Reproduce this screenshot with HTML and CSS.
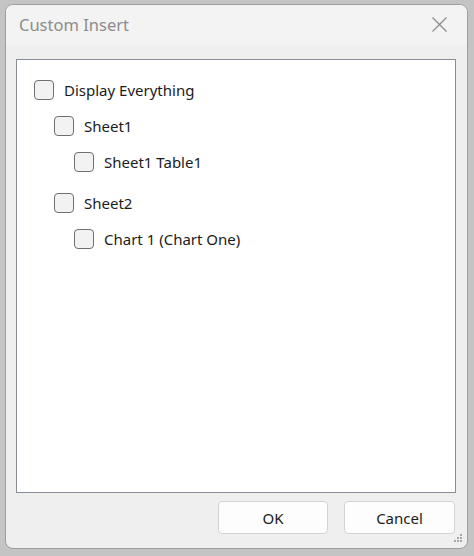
FILE: index.html
```html
<!DOCTYPE html>
<html>
<head>
<meta charset="utf-8">
<link rel="stylesheet" href="styles.css">
</head>
<body>
<div class="window">
  <div class="titlebar">
    <span class="title">Custom Insert</span>
    <svg class="close" width="15" height="15" viewBox="0 0 15 15"><path d="M0.5 0.5 L14.5 14.5 M14.5 0.5 L0.5 14.5" stroke="#8a8a8a" stroke-width="1.2" fill="none"/></svg>
  </div>
  <div class="content">
    <div class="tree">
      <div class="row lvl0"><span class="box"></span><span class="label">Display Everything</span></div>
      <div class="row lvl1"><span class="box"></span><span class="label">Sheet1</span></div>
      <div class="row lvl2"><span class="box"></span><span class="label">Sheet1 Table1</span></div>
      <div class="row lvl1 group"><span class="box"></span><span class="label">Sheet2</span></div>
      <div class="row lvl2"><span class="box"></span><span class="label">Chart 1 (Chart One)</span></div>
    </div>
    <div class="buttons">
      <button class="btn ok">OK</button>
      <button class="btn cancel">Cancel</button>
    </div>
  </div>
  <svg class="grip" width="12" height="12" viewBox="0 0 12 12">
    <rect x="8" y="1" width="2" height="2" fill="#a8a8a8"/>
    <rect x="5" y="4" width="2" height="2" fill="#a8a8a8"/>
    <rect x="8" y="4" width="2" height="2" fill="#a8a8a8"/>
    <rect x="2" y="7" width="2" height="2" fill="#a8a8a8"/>
    <rect x="5" y="7" width="2" height="2" fill="#a8a8a8"/>
    <rect x="8" y="7" width="2" height="2" fill="#a8a8a8"/>
  </svg>
</div>
</body>
</html>
```
FILE: styles.css
```css
html, body {
  margin: 0;
  padding: 0;
}
body {
  width: 474px;
  height: 556px;
  background: #c4c4c4;
  font-family: "Noto Sans", "Open Sans", sans-serif;
  overflow: hidden;
  padding-top: 4px;
  padding-left: 5px;
  box-sizing: border-box;
}
.window {
  position: relative;
  width: 463px;
  height: 545px;
  box-sizing: border-box;
  border: 1px solid #9e9e9e;
  border-radius: 8px;
  background: #efefef;
  overflow: hidden;
  display: flex;
  flex-direction: column;
}
.titlebar {
  height: 40px;
  background: #f3f3f3;
  display: flex;
  align-items: center;
  justify-content: space-between;
  padding: 0 20px 0 13px;
  flex-shrink: 0;
}
.title {
  color: #8c8c8c;
  font-size: 16.5px;
  margin-top: -1px;
}
.close {
  display: block;
  margin-top: -1px;
}
.content {
  flex: 1;
  display: flex;
  flex-direction: column;
  padding: 14px 11px 0 10px;
}
.tree {
  height: 434px;
  box-sizing: border-box;
  background: #ffffff;
  border: 1px solid #878c95;
  padding: 20px 0 0 17px;
  display: flex;
  flex-direction: column;
  gap: 16px;
}
.row {
  display: flex;
  align-items: center;
  height: 20px;
}
.row.lvl1 { padding-left: 20px; }
.row.lvl2 { padding-left: 40px; }
.row.group { margin-top: 5px; }
.box {
  width: 20px;
  height: 20px;
  box-sizing: border-box;
  border: 1px solid #6f6f6f;
  border-radius: 4px;
  background: #f2f2f2;
  flex-shrink: 0;
}
.label {
  margin-left: 10px;
  font-size: 15px;
  color: #1b1b1b;
}
.buttons {
  display: flex;
  justify-content: flex-end;
  gap: 16px;
  margin-top: 8px;
  padding-right: 1px;
}
.btn {
  height: 33px;
  box-sizing: border-box;
  border: 1px solid #d3d3d3;
  border-radius: 4px;
  background: #fdfdfd;
  font-family: "Noto Sans", "Open Sans", sans-serif;
  font-size: 15px;
  color: #1b1b1b;
  padding: 0;
}
.btn.ok { width: 110px; }
.btn.cancel { width: 111px; }
.grip {
  position: absolute;
  right: 3px;
  bottom: 3px;
}
```
